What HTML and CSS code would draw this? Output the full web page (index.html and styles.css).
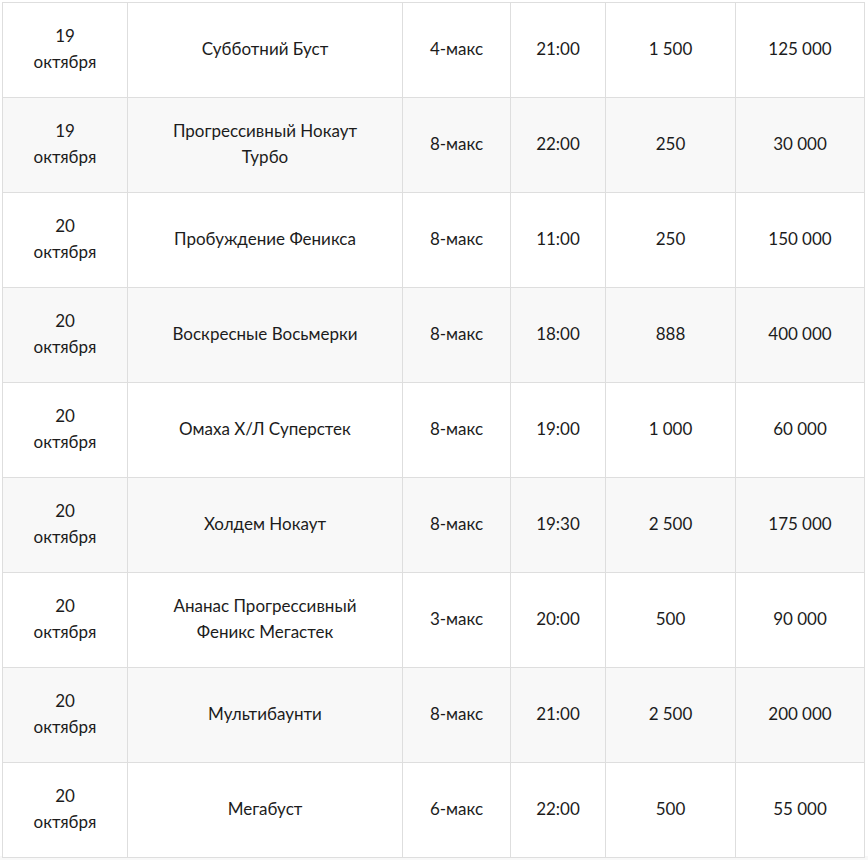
FILE: index.html
```html
<!DOCTYPE html>
<html lang="ru">
<head>
<meta charset="utf-8">
<title>Турниры</title>
<link rel="stylesheet" href="styles.css">
</head>
<body>
<div class="wrap">
<table class="schedule">
  <colgroup>
    <col class="c-date"><col class="c-name"><col class="c-max"><col class="c-time"><col class="c-buy"><col class="c-gtd">
  </colgroup>
  <tbody>
    <tr><td>19<br>октября</td><td>Субботний Буст</td><td>4-макс</td><td>21:00</td><td>1&#8239;500</td><td>125&#8239;000</td></tr>
    <tr><td>19<br>октября</td><td>Прогрессивный Нокаут Турбо</td><td>8-макс</td><td>22:00</td><td>250</td><td>30&#8239;000</td></tr>
    <tr><td>20<br>октября</td><td>Пробуждение Феникса</td><td>8-макс</td><td>11:00</td><td>250</td><td>150&#8239;000</td></tr>
    <tr><td>20<br>октября</td><td>Воскресные Восьмерки</td><td>8-макс</td><td>18:00</td><td>888</td><td>400&#8239;000</td></tr>
    <tr><td>20<br>октября</td><td>Омаха Х/Л Суперстек</td><td>8-макс</td><td>19:00</td><td>1&#8239;000</td><td>60&#8239;000</td></tr>
    <tr><td>20<br>октября</td><td>Холдем Нокаут</td><td>8-макс</td><td>19:30</td><td>2&#8239;500</td><td>175&#8239;000</td></tr>
    <tr><td>20<br>октября</td><td>Ананас Прогрессивный Феникс Мегастек</td><td>3-макс</td><td>20:00</td><td>500</td><td>90&#8239;000</td></tr>
    <tr><td>20<br>октября</td><td>Мультибаунти</td><td>8-макс</td><td>21:00</td><td>2&#8239;500</td><td>200&#8239;000</td></tr>
    <tr><td>20<br>октября</td><td>Мегабуст</td><td>6-макс</td><td>22:00</td><td>500</td><td>55&#8239;000</td></tr>
  </tbody>
</table>
</div>
</body>
</html>
```

FILE: styles.css
```css
html, body {
  margin: 0;
  padding: 0;
  background: #ffffff;
}

.wrap {
  padding: 2px 0 0 2px;
  height: 858px;
  overflow: hidden;
  background: linear-gradient(to bottom, #ffffff 856px, #f8f8f8 856px);
}

.schedule {
  border-collapse: collapse;
  table-layout: fixed;
  width: 862px;
  font-family: "Lato", "Noto Sans", sans-serif;
  font-size: 17px;
  line-height: 26px;
  color: #1c1c1c;
}

.c-date { width: 125px; }
.c-name { width: 275px; }
.c-max  { width: 108px; }
.c-time { width: 95px; }
.c-buy  { width: 130px; }
.c-gtd  { width: 129px; }

.schedule td {
  border: 1px solid #dedede;
  height: 95px;
  padding: 0 30px 2px;
  text-align: center;
  vertical-align: middle;
  box-sizing: border-box;
  background: #ffffff;
}

.schedule td:first-child,
.schedule td:nth-child(n+3) {
  padding: 0 8px 2px;
}

.schedule tr:nth-child(even) td {
  background: #f8f8f8;
}
```
